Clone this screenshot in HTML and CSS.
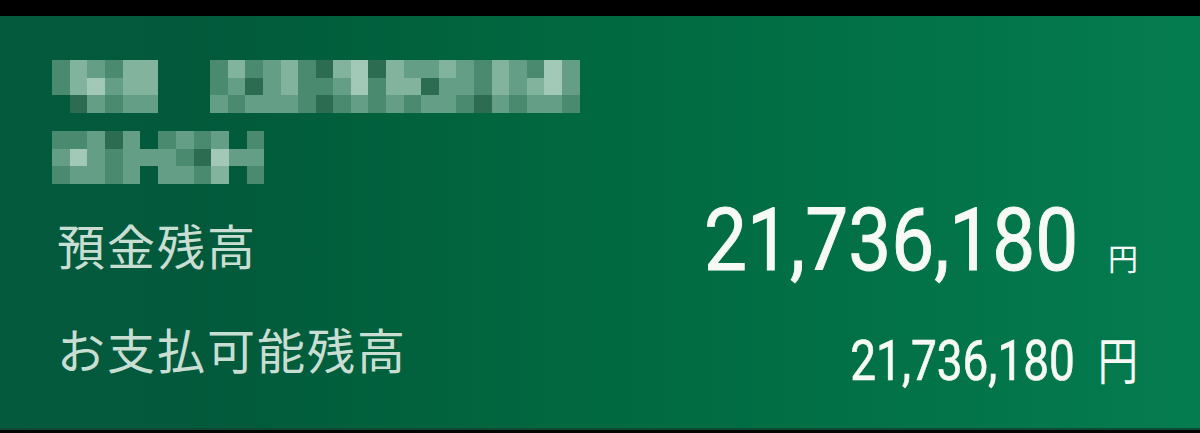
FILE: index.html
```html
<!DOCTYPE html>
<html lang="ja">
<head>
<meta charset="utf-8">
<title>残高</title>
<link rel="stylesheet" href="styles.css">
</head>
<body>
<div class="screen">
  <div class="topbar"></div>
  <section class="card">
    <div class="mosaic-row first">
      <div class="mosaic cols6">
        <i class="s2"></i><i class="s4"></i><i class="s3"></i><i class="s2"></i><i class="s4"></i><i class="s4"></i>
        <i class="s2"></i><i class="s4"></i><i class="s5"></i><i class="s3"></i><i class="s4"></i><i class="s4"></i>
        <i class="s0"></i><i class="s1"></i><i class="s3"></i><i class="s2"></i><i class="s3"></i><i class="s3"></i>
      </div>
      <div class="mosaic cols21">
        <i class="s2"></i><i class="s4"></i><i class="s2"></i><i class="s3"></i><i class="s4"></i><i class="s2"></i><i class="s1"></i><i class="s4"></i><i class="s5"></i><i class="s1"></i><i class="s4"></i><i class="s3"></i><i class="s3"></i><i class="s4"></i><i class="s3"></i><i class="s2"></i><i class="s4"></i><i class="s3"></i><i class="s2"></i><i class="s5"></i><i class="s3"></i>
        <i class="s2"></i><i class="s3"></i><i class="s1"></i><i class="s3"></i><i class="s4"></i><i class="s2"></i><i class="s2"></i><i class="s3"></i><i class="s5"></i><i class="s2"></i><i class="s4"></i><i class="s4"></i><i class="s1"></i><i class="s3"></i><i class="s3"></i><i class="s2"></i><i class="s4"></i><i class="s3"></i><i class="s4"></i><i class="s5"></i><i class="s3"></i>
        <i class="s3"></i><i class="s2"></i><i class="s3"></i><i class="s3"></i><i class="s3"></i><i class="s2"></i><i class="s1"></i><i class="s2"></i><i class="s3"></i><i class="s2"></i><i class="s3"></i><i class="s2"></i><i class="s3"></i><i class="s3"></i><i class="s2"></i><i class="s1"></i><i class="s3"></i><i class="s2"></i><i class="s3"></i><i class="s3"></i><i class="s2"></i>
      </div>
    </div>
    <div class="mosaic-row second">
      <div class="mosaic cols12">
        <i class="s2"></i><i class="s2"></i><i class="s3"></i><i class="s1"></i><i class="s3"></i><i class="s0"></i><i class="s2"></i><i class="s3"></i><i class="s2"></i><i class="s3"></i><i class="s0"></i><i class="s2"></i>
        <i class="s3"></i><i class="s5"></i><i class="s3"></i><i class="s2"></i><i class="s3"></i><i class="s3"></i><i class="s3"></i><i class="s2"></i><i class="s1"></i><i class="s5"></i><i class="s3"></i><i class="s3"></i>
        <i class="s2"></i><i class="s3"></i><i class="s3"></i><i class="s2"></i><i class="s3"></i><i class="s0"></i><i class="s3"></i><i class="s3"></i><i class="s2"></i><i class="s4"></i><i class="s0"></i><i class="s2"></i>
      </div>
    </div>

    <div class="balance-row main">
      <span class="label">預金残高</span>
      <span class="amount">
        <span class="num big">21,736,180</span>
        <span class="yen big">円</span>
      </span>
    </div>
    <div class="balance-row sub">
      <span class="label">お支払可能残高</span>
      <span class="amount">
        <span class="num small">21,736,180</span>
        <span class="yen small">円</span>
      </span>
    </div>
  </section>
  <div class="bottombar"></div>
</div>
</body>
</html>
```

FILE: styles.css
```css
html, body {
  margin: 0;
  padding: 0;
  background: #000;
}

.screen {
  width: 1200px;
  height: 433px;
  display: flex;
  flex-direction: column;
  overflow: hidden;
}

.topbar {
  height: 16px;
  background: #000;
  flex: none;
}

.bottombar {
  height: 3px;
  background: #050505;
  flex: none;
}

.card {
  flex: 1;
  box-sizing: border-box;
  padding: 44px 62px 0 52px;
  background: linear-gradient(90deg, #045a3d 0%, #02593b 15%, #01673f 45%, #027046 70%, #057c50 100%);
  border-bottom: 2px solid #0c4a33;
  font-family: "Noto Sans CJK JP", sans-serif;
}

.mosaic-row {
  display: flex;
  gap: 52px;
}

.mosaic-row.second {
  margin-top: 18px;
}

.mosaic {
  display: grid;
  grid-auto-rows: 17.7px;
  grid-template-columns: repeat(6, 17.7px);
}

.mosaic.cols21 { grid-template-columns: repeat(21, 17.6px); }
.mosaic.cols12 { grid-template-columns: repeat(12, 17.7px); }

.mosaic i { display: block; }
.s0 { background: transparent; }
.s1 { background: #2c6c50; }
.s2 { background: #4a8a6e; }
.s3 { background: #649e86; }
.s4 { background: #82b39d; }
.s5 { background: #a2c8b8; }

.balance-row {
  display: flex;
  justify-content: space-between;
  align-items: flex-start;
  padding-left: 5px;
}

.balance-row.main {
  margin-top: 13px;
}

.balance-row.sub {
  margin-top: 40px;
}

.label {
  font-size: 48px;
  line-height: 1;
  letter-spacing: 2px;
  color: #c9ded3;
}

.main .label { margin-top: 23px; }
.sub .amount { margin-top: 9px; }

.amount {
  display: flex;
  align-items: baseline;
  color: #f6f9f6;
}

.num {
  font-family: Roboto, sans-serif;
  line-height: 1;
  display: inline-block;
  transform-origin: right center;
  -webkit-text-stroke: 1px currentColor;
}

.num.big {
  font-size: 87px;
  transform: scaleX(0.88);
}

.num.small {
  font-size: 56px;
  transform: scaleX(0.82);
  -webkit-text-stroke: 0.7px currentColor;
}

.yen {
  font-family: "Noto Sans CJK JP", sans-serif;
  line-height: 1;
  display: inline-block;
  transform-origin: right center;
}

.yen.big {
  font-size: 30px;
  margin-left: 30px;
}

.yen.small {
  font-size: 51px;
  margin-left: 12px;
  transform: scaleX(0.79);
}
```
